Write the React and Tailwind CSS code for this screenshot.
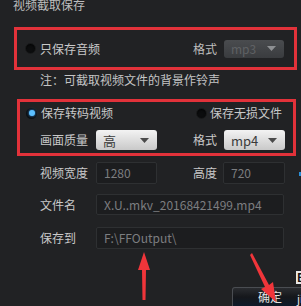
import React from "react";

const font = { fontFamily: '"Noto Sans CJK SC", "Noto Sans", sans-serif' };

function Caret({ className }) {
  return (
    <svg width="9" height="5" viewBox="0 0 9 5" className={className}>
      <path d="M0 0 L9 0 L4.5 5 Z" fill="currentColor" />
    </svg>
  );
}

function DarkRadio() {
  return (
    <span className="block w-[11px] h-[11px] rounded-full bg-[#0c0d0e] border border-[#1a1b1c] shadow-[inset_0_1px_2px_rgba(0,0,0,0.8)] shrink-0" />
  );
}

function BlueRadio() {
  return (
    <span className="w-[11px] h-[11px] rounded-full bg-[#0c0d0e] flex items-center justify-center shrink-0">
      <span className="w-[6px] h-[6px] rounded-full bg-[#5cc0ff] shadow-[0_0_3px_#3aa0ff]" />
    </span>
  );
}

function LightSelect({ value, w }) {
  return (
    <div
      className={`${w} h-[20px] shrink-0 rounded-[3px] bg-gradient-to-b from-[#f3f3f3] to-[#c9c9c9] flex items-center justify-between pl-[7px] pr-[8px] text-[13px] text-[#3a3a3a]`}
    >
      <span className="leading-none">{value}</span>
      <Caret className="text-[#4a4a4a]" />
    </div>
  );
}

function Input({ value, w, h = "h-[22px]" }) {
  return (
    <div
      className={`${w} ${h} shrink-0 rounded-[2px] bg-[#1c1d1f] border border-[#2e3032] flex items-center pl-[7px] text-[12px] text-[#7c7e80] whitespace-nowrap overflow-hidden`}
    >
      {value}
    </div>
  );
}

export default function App() {
  return (
    <div
      className="relative w-[301px] h-[306px] overflow-hidden bg-[#212224] text-[12px] text-[#c9c9c9] whitespace-nowrap"
      style={font}
    >
      {/* title */}
      <div className="h-[13px] pl-[13px] leading-[9px] text-[#bdbdbd]">视频截取保存</div>

      {/* box 1 */}
      <div className="mt-[14px] ml-[14px] w-[283px] h-[43px] border-[3px] border-[#e2323a] flex items-center pl-[8px] pr-[10px]">
        <DarkRadio />
        <span className="ml-[4px]">只保存音频</span>
        <span className="ml-auto mr-[7px] text-[#bdbdbd]">格式</span>
        <div className="w-[60px] h-[18px] shrink-0 rounded-[3px] bg-gradient-to-b from-[#4a4c4f] to-[#3a3c3f] flex items-center justify-between pl-[7px] pr-[8px] text-[12px] text-[#5f6164]">
          <span className="leading-none">mp3</span>
          <Caret className="text-[#8e9093]" />
        </div>
      </div>

      {/* note */}
      <div className="h-[20px] leading-[20px] pl-[40px] text-[#c4c4c4]">注：可截取视频文件的背景作铃声</div>

      {/* box 2 */}
      <div className="mt-[9px] ml-[17px] w-[279px] h-[57px] border-[3px] border-[#e2323a] flex flex-col">
        <div className="h-[22px] flex items-center pl-[6px]">
          <BlueRadio />
          <span className="ml-[4px] shrink-0">保存转码视频</span>
          <span className="ml-[83px] shrink-0"><DarkRadio /></span>
          <span className="ml-[3px] shrink-0">保存无损文件</span>
        </div>
        <div className="mt-[6px] h-[20px] flex items-center pl-[20px]">
          <span className="w-[56px] shrink-0">画面质量</span>
          <LightSelect value="高" w="w-[61px]" />
          <span className="ml-[36px] w-[31px] shrink-0">格式</span>
          <LightSelect value="mp4" w="w-[61px]" />
        </div>
      </div>

      {/* rows */}
      <div className="mt-[6px] h-[22px] flex items-center pl-[40px]">
        <span className="w-[56px] shrink-0">视频宽度</span>
        <Input value="1280" w="w-[61px]" />
        <span className="ml-[36px] w-[30px] shrink-0">高度</span>
        <Input value="720" w="w-[62px]" />
      </div>
      <div className="mt-[10px] h-[21px] flex items-center pl-[40px]">
        <span className="w-[56px] shrink-0">文件名</span>
        <Input value="X.U..mkv_20168421499.mp4" w="w-[188px]" h="h-[21px]" />
      </div>
      <div className="mt-[12px] h-[22px] flex items-center pl-[40px]">
        <span className="w-[56px] shrink-0">保存到</span>
        <Input value="F:\FFOutput\" w="w-[188px]" />
      </div>

      {/* bottom button */}
      <div className="mt-[38px] ml-[232px] w-[78px] h-[19px] rounded-t-[3px] border border-b-0 border-[#4a4d52] bg-gradient-to-b from-[#2a2c30] via-[#15171b] to-[#0e1a2a] pl-[25px] pt-[3px] leading-[12px] text-[#e4e4e4] text-[12px]">
        确定
      </div>

      {/* watermark */}
      <div className="absolute left-[296px] top-[271px] w-[8px] h-[13px] bg-[#e8e8e8] text-[#111] text-[11px] font-bold leading-[13px] pl-[1px]">E</div>
      <div className="absolute left-[297px] top-[292px] text-[#e8e8e8] text-[11px] leading-[12px]">ji</div>

      {/* right blue mark */}
      <div className="absolute left-[299px] top-[172px] w-[2px] h-[4px] bg-[#2a8fd8]" />

      {/* arrows */}
      <svg className="absolute left-0 top-0 pointer-events-none" width="301" height="306" viewBox="0 0 301 306">
        <path d="M144 252 L150 270 L146 270 L145.5 300 L142.5 300 L142 270 L138 270 Z" fill="#f0353a" />
        <path d="M252 253 L269 285 L273 282 L276 302 L261 289 L265 287 L250 255 Z" fill="#f0353a" />
      </svg>
    </div>
  );
}
